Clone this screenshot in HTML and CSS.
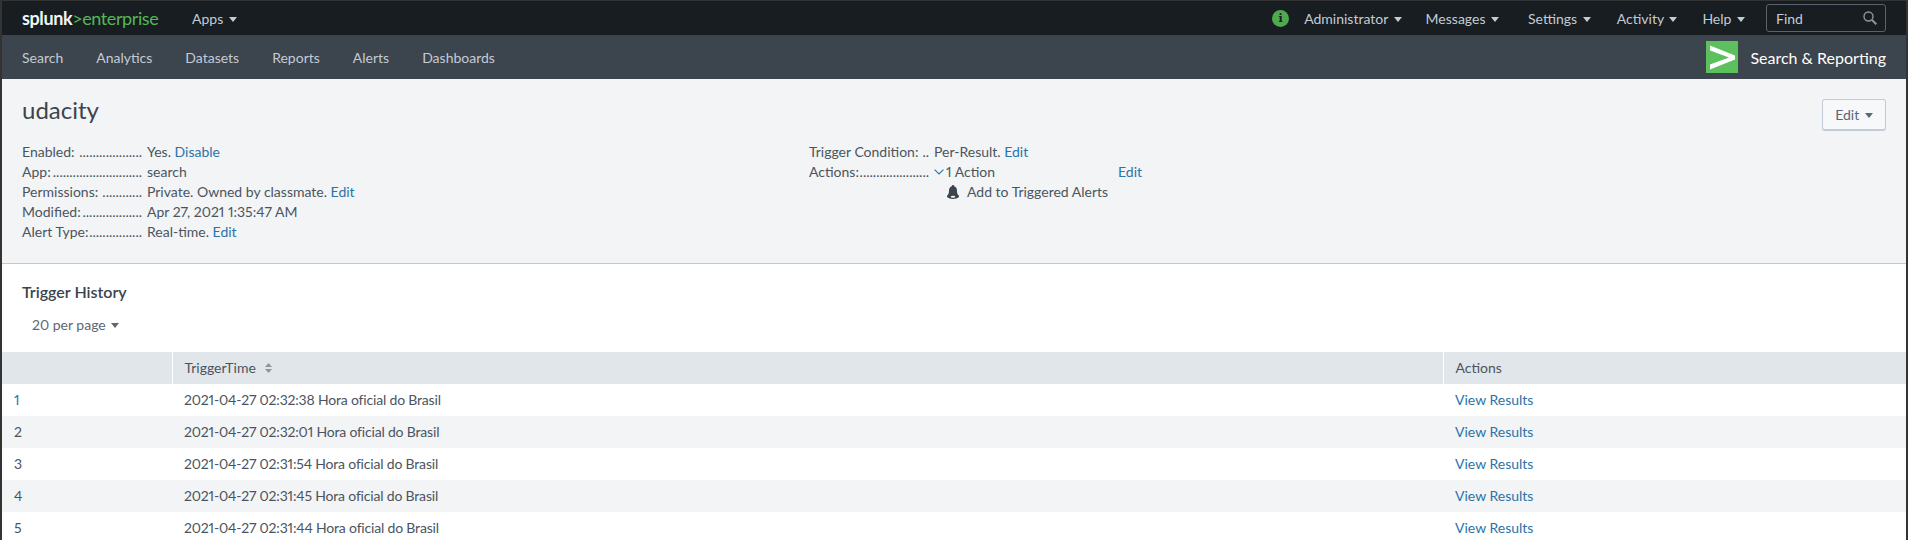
FILE: index.html
```html
<!DOCTYPE html>
<html lang="en">
<head>
    <meta charset="UTF-8">
    <title>udacity | Splunk</title>
    <link rel="stylesheet" href="styles.css">
</head>
<body>
    <div class="window">
        <header class="topbar">
            <div class="brand"><b>splunk</b><span class="brand-gt">&gt;</span><span class="brand-name">enterprise</span></div>
            <a class="top-link apps">Apps <i class="caret"></i></a>
            <div class="top-right">
                <span class="info-dot">i</span>
                <a class="top-link admin">Administrator <i class="caret"></i></a>
                <a class="top-link messages">Messages <i class="caret"></i></a>
                <a class="top-link settings">Settings <i class="caret"></i></a>
                <a class="top-link activity">Activity <i class="caret"></i></a>
                <a class="top-link help">Help <i class="caret"></i></a>
                <div class="find">
                    <span>Find</span>
                    <svg width="14" height="14" viewBox="0 0 14 14" fill="none" stroke="#8c96a0" stroke-width="1.4">
                        <circle cx="5.5" cy="5.5" r="4.5"/>
                        <path d="M9 9l4.3 4.3" stroke-width="2"/>
                    </svg>
                </div>
            </div>
        </header>

        <nav class="appbar">
            <a>Search</a>
            <a>Analytics</a>
            <a>Datasets</a>
            <a>Reports</a>
            <a>Alerts</a>
            <a>Dashboards</a>
            <div class="app-title">
                <svg class="app-logo" width="32" height="32" viewBox="0 0 32 32">
                    <rect width="32" height="32" fill="#5cc05c"/>
                    <path d="M4 4.500L29 14.500V18.500L4 28.500V23.500L23 16.500L4 9.500Z" fill="#fff"/>
                </svg>
                <span>Search &amp; Reporting</span>
            </div>
        </nav>

        <section class="page-head">
            <div class="title-row">
                <h1>udacity</h1>
                <button class="edit-btn">Edit <i class="caret"></i></button>
            </div>
            <div class="meta">
                <div class="meta-col">
                    <div class="meta-row"><span class="meta-label"><span>Enabled:</span><span>...................</span></span><span>Yes. <a>Disable</a></span></div>
                    <div class="meta-row"><span class="meta-label"><span>App:</span><span>...........................</span></span><span>search</span></div>
                    <div class="meta-row"><span class="meta-label"><span>Permissions:</span><span>............</span></span><span>Private. Owned by classmate. <a>Edit</a></span></div>
                    <div class="meta-row"><span class="meta-label"><span>Modified:</span><span>..................</span></span><span>Apr 27, 2021 1:35:47 AM</span></div>
                    <div class="meta-row"><span class="meta-label"><span>Alert Type:</span><span>................</span></span><span>Real-time. <a>Edit</a></span></div>
                </div>
                <div class="meta-col">
                    <div class="meta-row"><span class="meta-label"><span>Trigger Condition:</span><span>..</span></span><span>Per-Result. <a>Edit</a></span></div>
                    <div class="meta-row">
                        <span class="meta-label"><span>Actions:</span><span>.....................</span></span>
                        <span class="actions-value">
                            <svg width="10" height="6" viewBox="0 0 10 6" fill="none" stroke="#2b73a8" stroke-width="1.1"><path d="M.6.6L5 5l4.4-4.4"/></svg>
                            <span>1 Action</span>
                        </span>
                        <a>Edit</a>
                    </div>
                    <div class="meta-row alert-action">
                        <svg width="14" height="15" viewBox="0 0 14 15" fill="#3c444d">
                            <path d="M7 0a1.200 1.200 0 0 1 1.200 1.300C10.300 1.900 11 3.700 11 6c0 2.500.8 3.600 2 4.800V12c-1.500 1.300-3.700 2-6 2s-4.500-.7-6-2v-1.200C2.200 9.600 3 8.500 3 6c0-2.300.7-4.100 2.800-4.700A1.200 1.200 0 0 1 7 0z"/>
                            <ellipse cx="7" cy="11.700" rx="2.300" ry="1" fill="#f2f4f5"/>
                        </svg>
                        <span>Add to Triggered Alerts</span>
                    </div>
                </div>
            </div>
        </section>

        <section class="history">
            <h2>Trigger History</h2>
            <div class="per-page">20 per page <i class="caret"></i></div>
            <table>
                <thead>
                    <tr>
                        <th class="col-num"></th>
                        <th class="col-time">TriggerTime
                            <svg class="sort" width="7" height="10" viewBox="0 0 7 10" fill="#8c96a0"><path d="M3.500 0L7 4H0zM3.500 10L0 6h7z"/></svg>
                        </th>
                        <th class="col-actions">Actions</th>
                    </tr>
                </thead>
                <tbody>
                    <tr><td><a>1</a></td><td>2021-04-27 02:32:38 Hora oficial do Brasil</td><td><a>View Results</a></td></tr>
                    <tr><td>2</td><td>2021-04-27 02:32:01 Hora oficial do Brasil</td><td><a>View Results</a></td></tr>
                    <tr><td>3</td><td>2021-04-27 02:31:54 Hora oficial do Brasil</td><td><a>View Results</a></td></tr>
                    <tr><td>4</td><td>2021-04-27 02:31:45 Hora oficial do Brasil</td><td><a>View Results</a></td></tr>
                    <tr><td>5</td><td>2021-04-27 02:31:44 Hora oficial do Brasil</td><td><a>View Results</a></td></tr>
                </tbody>
            </table>
        </section>
    </div>
</body>
</html>
```

FILE: styles.css
```css
html, body {
    height: 100%;
}
body {
    margin: 0;
    overflow: hidden;
    font-family: Lato, "Open Sans", sans-serif;
    font-size: 14px;
    font-variant-numeric: proportional-nums;
    color: #4b545e;
    background-color: #fff;
}
a {
    color: #2b73a8;
}
.window {
    height: 540px;
    box-sizing: border-box;
    border-style: solid;
    border-color: #333;
    border-width: 1px 2px 0 2px;
    overflow: hidden;
}
.caret {
    display: inline-block;
    width: 0;
    height: 0;
    margin-left: 2px;
    vertical-align: 2px;
    border-left: 4px solid transparent;
    border-right: 4px solid transparent;
    border-top: 5px solid currentColor;
}

/* top bar */
.topbar {
    display: flex;
    align-items: center;
    height: 34px;
    padding-left: 20px;
    padding-right: 20px;
    background-color: #171d21;
}
.brand {
    width: 170px;
    font-size: 18px;
    letter-spacing: -0.4px;
    white-space: nowrap;
}
.brand b {
    color: #f2f4f5;
}
.brand-gt,
.brand-name {
    color: #55b755;
}
.top-link {
    color: #c3cbd4;
    white-space: nowrap;
}
.top-right {
    display: flex;
    align-items: center;
    margin-left: auto;
}
.info-dot {
    width: 17px;
    height: 17px;
    margin-right: 15px;
    border-radius: 50%;
    background-color: #4fa94f;
    color: #171d21;
    font-family: "DejaVu Serif", serif;
    font-size: 11px;
    font-weight: bold;
    line-height: 17px;
    text-align: center;
}
.admin { margin-right: 24px; }
.messages { margin-right: 29px; }
.settings { margin-right: 26px; }
.activity { margin-right: 25px; }
.help { margin-right: 21px; }
.find {
    display: flex;
    align-items: center;
    justify-content: space-between;
    box-sizing: border-box;
    width: 120px;
    height: 28px;
    padding: 0 8px 0 9px;
    border: 1px solid #59636d;
    border-radius: 3px;
    color: #c3cbd4;
}

/* app bar */
.appbar {
    display: flex;
    align-items: center;
    gap: 33px;
    height: 44px;
    padding: 0 20px;
    background-color: #3c444d;
}
.appbar a {
    color: #c3cbd4;
}
.app-title {
    display: flex;
    align-items: center;
    gap: 12px;
    margin-left: auto;
    color: #fff;
    font-size: 16px;
}

/* page header */
.page-head {
    box-sizing: border-box;
    height: 185px;
    padding: 16px 20px 0;
    background-color: #f2f4f5;
    border-bottom: 1px solid #c0c8d8;
}
.title-row {
    display: flex;
    justify-content: space-between;
    align-items: flex-start;
    height: 47px;
}
h1 {
    margin: 0;
    font-size: 24px;
    font-weight: 400;
    line-height: 30px;
    color: #3c444d;
}
.edit-btn {
    height: 32px;
    width: 64px;
    margin-top: 4px;
    padding: 0;
    border: 1px solid #c3cbd4;
    border-bottom-width: 2px;
    border-radius: 3px;
    background-color: #f7f8fa;
    color: #5c6773;
    font-family: inherit;
    font-size: 14px;
}
.meta {
    display: flex;
}
.meta-col {
    width: 787px;
}
.meta-row {
    display: flex;
    height: 20px;
    line-height: 20px;
}
.meta-label {
    display: flex;
    justify-content: space-between;
    width: 120px;
    margin-right: 5px;
    white-space: nowrap;
}
.actions-value {
    display: flex;
    align-items: center;
    gap: 2px;
    width: 184px;
}
.alert-action {
    align-items: center;
    gap: 7px;
    padding-left: 137px;
}

/* trigger history */
.history h2 {
    margin: 0;
    padding: 17px 20px 0;
    font-size: 16px;
    font-weight: 600;
    line-height: 22px;
    color: #3c444d;
}
.per-page {
    box-sizing: border-box;
    height: 49px;
    padding: 12px 30px 0;
    line-height: 20px;
    color: #5c6773;
}
table {
    width: 100%;
    border-collapse: collapse;
    table-layout: fixed;
}
th, td {
    box-sizing: border-box;
    height: 32px;
    padding: 0 0 2px 12px;
}
th {
    background-color: #e1e6eb;
    border-left: 1px solid #fff;
    font-weight: 400;
    text-align: left;
}
th:first-child {
    border-left: none;
}
td:nth-child(2) {
    letter-spacing: -0.18px;
}
.col-num { width: 170px; }
.col-actions { width: 463px; }
.sort {
    margin-left: 6px;
}
tbody tr:nth-child(even) {
    background-color: #f2f4f5;
}
```
